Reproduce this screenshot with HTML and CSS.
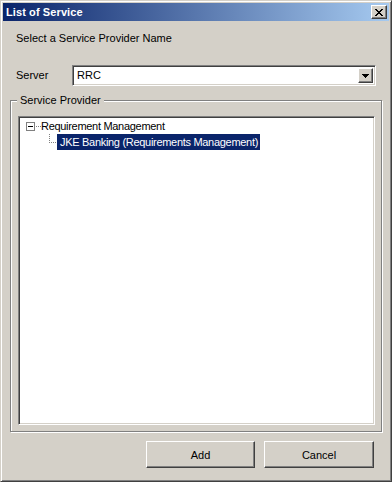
FILE: index.html
```html
<!DOCTYPE html>
<html>
<head>
<meta charset="utf-8">
<title>List of Service</title>
<link rel="stylesheet" href="styles.css">
</head>
<body>
<div class="window">
  <div class="titlebar">
    <span class="title">List of Service</span>
    <span class="close">
      <svg width="8" height="7" viewBox="0 0 8 7" shape-rendering="crispEdges">
        <path d="M0 0h2v1H0zM6 0h2v1H6zM1 1h2v1H1zM5 1h2v1H5zM2 2h4v1H2zM3 3h2v1H3zM2 4h4v1H2zM1 5h2v1H1zM5 5h2v1H5zM0 6h2v1H0zM6 6h2v1H6z" fill="#000"/>
      </svg>
    </span>
  </div>
  <div class="content">
    <div class="prompt">Select a Service Provider Name</div>
    <div class="server-row">
      <span class="label">Server</span>
      <div class="combo">
        <span class="combo-text">RRC</span>
        <span class="combo-btn">
          <svg width="7" height="4" viewBox="0 0 7 4" shape-rendering="crispEdges">
            <path d="M0 0h7v1H0zM1 1h5v1H1zM2 2h3v1H2zM3 3h1v1H3z" fill="#000"/>
          </svg>
        </span>
      </div>
    </div>
    <div class="group">
      <span class="legend">Service Provider</span>
      <div class="tree">
        <div class="node root">
          <svg class="expander" width="16" height="16" viewBox="0 0 16 16" shape-rendering="crispEdges">
            <rect x="1.5" y="4.5" width="8" height="8" fill="#fff" stroke="#808080"/>
            <path d="M3 8h5v1H3z" fill="#000"/>
            <path d="M11 8h1v1h-1zM13 8h1v1h-1zM15 8h1v1h-1z" fill="#808080"/>
          </svg>
          <span class="node-text">Requirement Management</span>
        </div>
        <div class="node child">
          <svg class="connector" width="12" height="16" viewBox="0 0 12 16" shape-rendering="crispEdges">
            <path d="M4 0h1v1H4zM4 2h1v1H4zM4 4h1v1H4zM4 6h1v1H4zM4 8h1v1H4zM6 8h1v1H6zM8 8h1v1H8zM10 8h1v1h-1z" fill="#808080"/>
          </svg>
          <span class="node-text selected">JKE Banking (Requirements Management)</span>
        </div>
      </div>
    </div>
    <div class="buttons">
      <button class="btn btn-add">Add</button>
      <button class="btn btn-cancel">Cancel</button>
    </div>
  </div>
</div>
</body>
</html>
```

FILE: styles.css
```css
* {
  box-sizing: border-box;
}

html,
body {
  margin: 0;
  padding: 0;
}

body {
  width: 392px;
  height: 482px;
  background: #d4d0c8;
  font-family: "Liberation Sans", Arial, sans-serif;
  font-size: 11px;
  color: #000;
}

.window {
  width: 392px;
  height: 482px;
  background: #d4d0c8;
  border: 1px solid;
  border-color: #d4d0c8 #404040 #404040 #d4d0c8;
  box-shadow: inset 1px 1px #fff, inset -1px -1px #808080;
  padding: 2px;
  display: flex;
  flex-direction: column;
}

.titlebar {
  height: 18px;
  flex: none;
  background: linear-gradient(to right, #0a246a, #a6caf0);
  display: flex;
  align-items: center;
  justify-content: space-between;
  padding: 0 2px 0 3px;
}

.title {
  color: #fff;
  font-weight: bold;
  font-size: 11px;
  line-height: 13px;
  letter-spacing: 0.1px;
}

.close {
  width: 16px;
  height: 14px;
  background: #d4d0c8;
  border: 1px solid;
  border-color: #fff #404040 #404040 #fff;
  box-shadow: inset -1px -1px #808080;
  display: flex;
  align-items: center;
  justify-content: center;
  padding-right: 1px;
}

.close svg {
  display: block;
}

.content {
  flex: 1;
  display: flex;
  flex-direction: column;
}

.prompt {
  margin: 11px 0 0 13px;
  line-height: 13px;
}

.server-row {
  display: flex;
  align-items: center;
  margin-top: 20px;
  padding-left: 13px;
  height: 21px;
}

.label {
  width: 56px;
  line-height: 13px;
}

.combo {
  width: 304px;
  height: 21px;
  background: #fff;
  border: 1px solid;
  border-color: #808080 #fff #fff #808080;
  box-shadow: inset 1px 1px #404040, inset -1px -1px #d4d0c8;
  display: flex;
  align-items: center;
  justify-content: space-between;
  padding: 2px 2px 2px 4px;
}

.combo-text {
  line-height: 13px;
}

.combo-btn {
  width: 15px;
  height: 15px;
  background: #d4d0c8;
  border: 1px solid;
  border-color: #fff #404040 #404040 #fff;
  box-shadow: inset -1px -1px #808080;
  display: flex;
  align-items: center;
  justify-content: center;
}

.combo-btn svg {
  display: block;
}

.group {
  position: relative;
  margin: 14px 0 0 7px;
  width: 372px;
  height: 332px;
  flex: none;
  border: 1px solid #808080;
  box-shadow: inset 1px 1px #fff, 1px 1px #fff;
  padding: 15px 6px 6px 7px;
}

.legend {
  position: absolute;
  top: -7px;
  left: 6px;
  padding: 0 3px;
  background: #d4d0c8;
  line-height: 13px;
}

.tree {
  width: 357px;
  height: 309px;
  background: #fff;
  border: 1px solid;
  border-color: #808080 #fff #fff #808080;
  box-shadow: inset 1px 1px #404040, inset -1px -1px #d4d0c8;
  padding: 1px;
}

.node {
  display: flex;
  align-items: center;
  height: 16px;
}

.node svg {
  display: block;
  flex: none;
}

.root {
  padding-left: 5px;
}

.child {
  padding-left: 25px;
}

.node-text {
  letter-spacing: -0.3px;
  line-height: 13px;
  white-space: nowrap;
}

.selected {
  background: #0a246a;
  color: #fff;
  line-height: 16px;
  padding: 0 2px 0 3px;
}

.buttons {
  display: flex;
  justify-content: flex-end;
  gap: 9px;
  margin-top: 9px;
  padding-right: 15px;
}

.btn {
  height: 27px;
  margin: 0;
  background: #d4d0c8;
  border: 1px solid;
  border-color: #fff #404040 #404040 #fff;
  box-shadow: inset -1px -1px #808080;
  font-family: "Liberation Sans", Arial, sans-serif;
  font-size: 11px;
  color: #000;
  padding: 0;
}

.btn-add {
  width: 109px;
}

.btn-cancel {
  width: 110px;
}
```
